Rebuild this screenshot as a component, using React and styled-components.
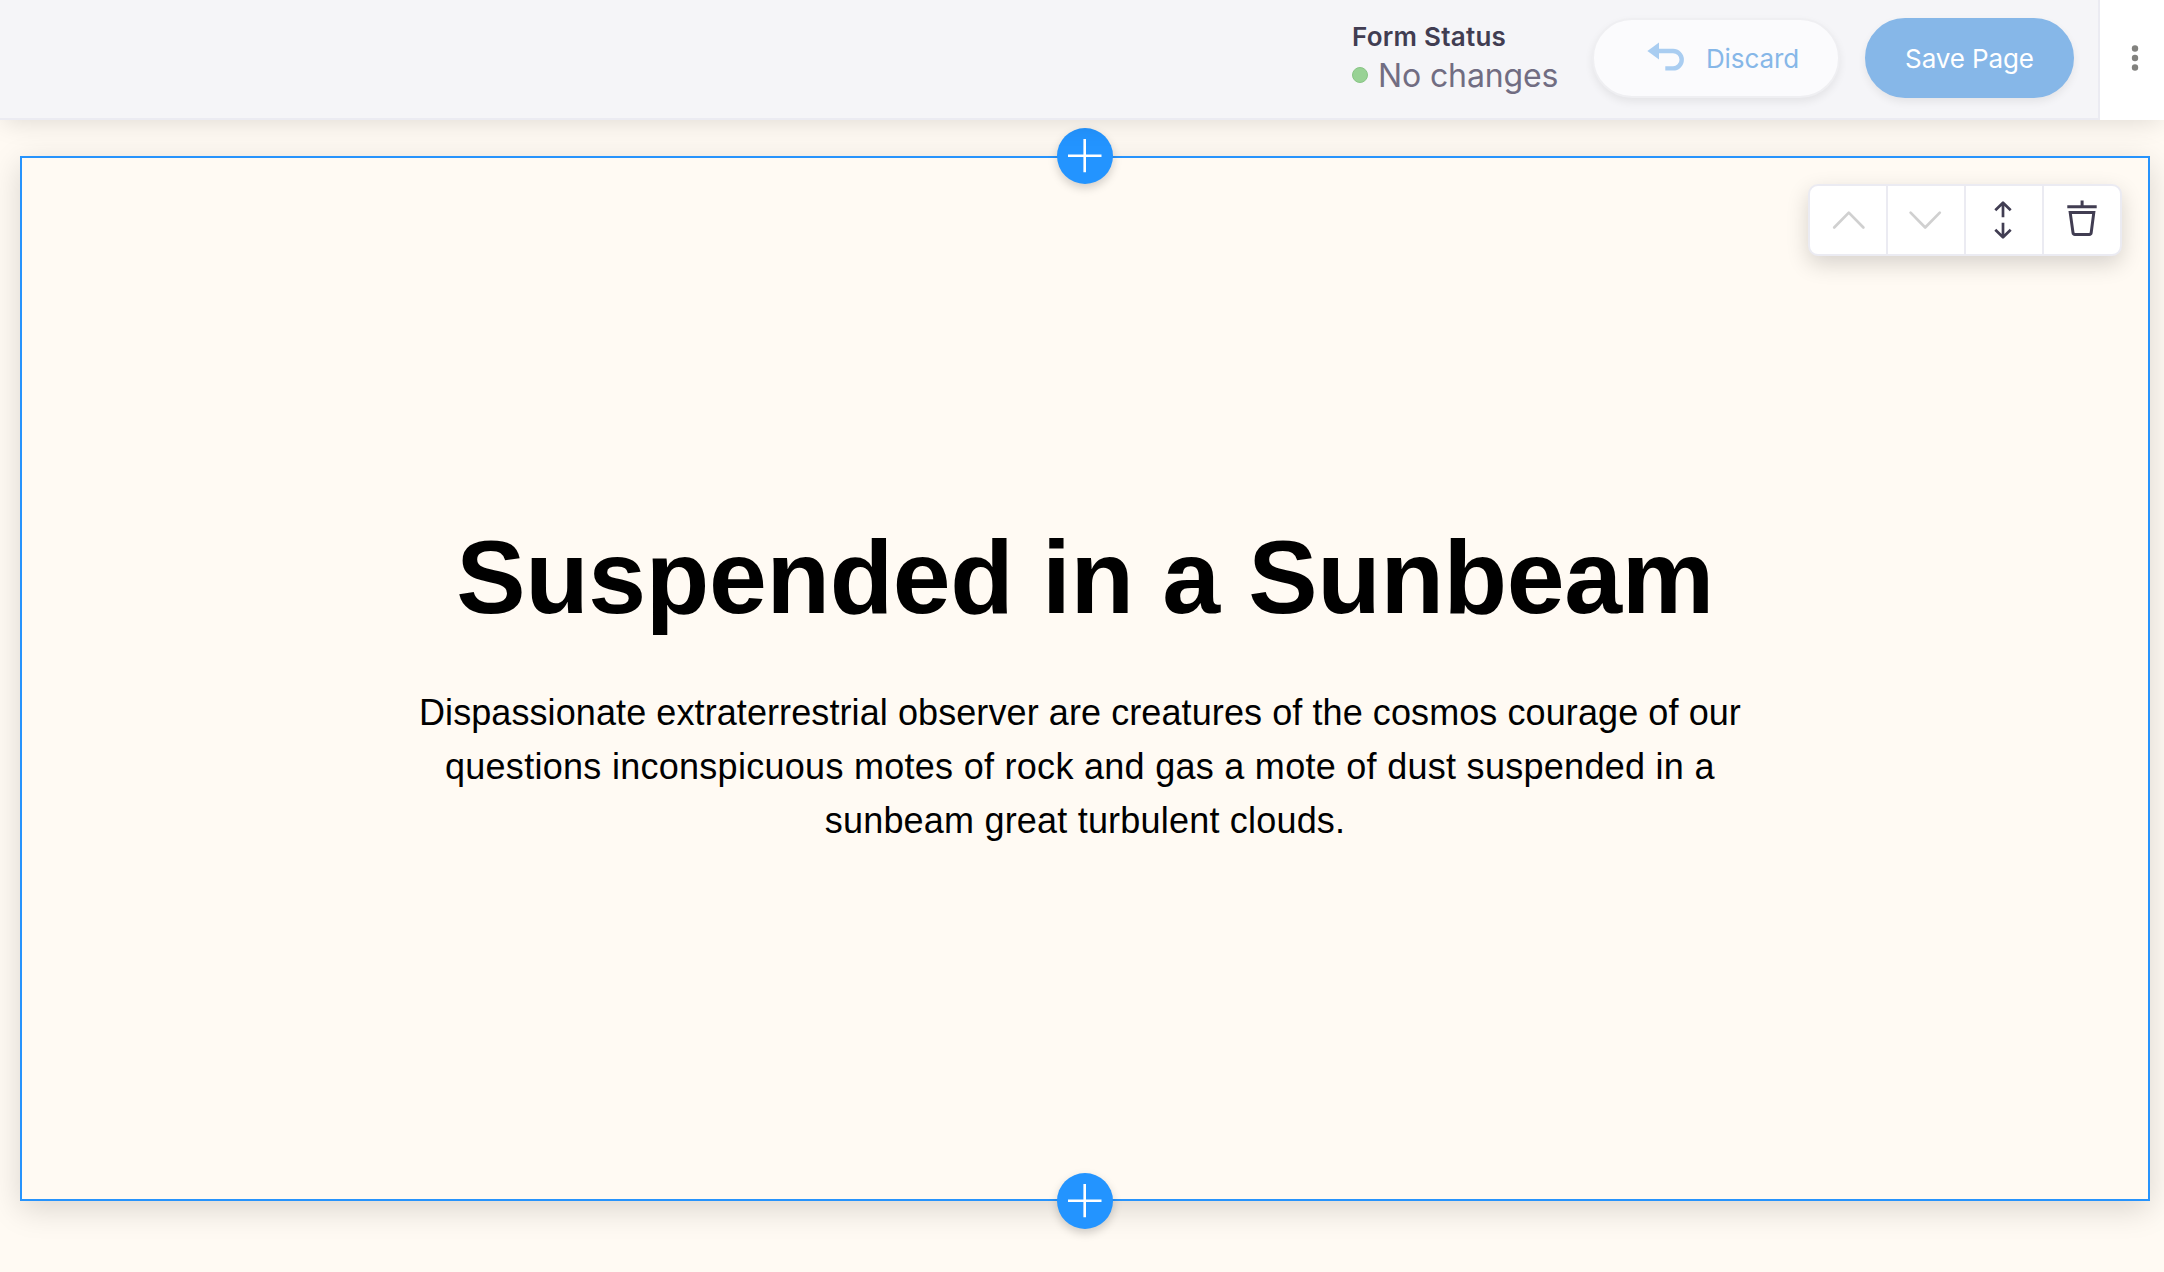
import React from "react";
import styled, { createGlobalStyle } from "styled-components";

const GlobalStyle = createGlobalStyle`
  *, *::before, *::after { box-sizing: border-box; }
  body { margin: 0; background: #fffaf3; font-family: Inter, "Liberation Sans", sans-serif; }
`;

const Page = styled.div`
  width: 100%;
  height: 1272px;
  display: flex;
  flex-direction: column;
  overflow: hidden;
  background: #fffaf3;
`;

const Header = styled.header`
  position: relative;
  z-index: 1;
  flex: none;
  display: flex;
  height: 120px;
  box-shadow: 0 6px 24px -4px rgba(0, 0, 0, 0.13);
`;

const Bar = styled.div`
  flex: 1;
  display: flex;
  justify-content: flex-end;
  align-items: flex-start;
  padding: 18px 24px 0 0;
  background: #f5f5f8;
  border-right: 2px solid #ebebf2;
  border-bottom: 2px solid #ebebf2;
`;

const More = styled.button`
  width: 64px;
  padding: 0 0 4px 6px;
  border: 0;
  background: #fff;
  display: flex;
  align-items: center;
  justify-content: center;
`;

const Status = styled.div`
  width: 240px;
`;

const StatusLabel = styled.div`
  margin-top: 3px;
  font-size: 26px;
  font-weight: 600;
  line-height: 32px;
  letter-spacing: 0.25px;
  color: #413d52;
  white-space: nowrap;
`;

const StatusValue = styled.div`
  display: flex;
  align-items: center;
  gap: 10px;
  margin-top: 3px;
  font-size: 32px;
  line-height: 40px;
  letter-spacing: -0.12px;
  color: #716d82;
  white-space: nowrap;
`;

const Dot = styled.i`
  width: 16px;
  height: 16px;
  margin-bottom: 2px;
  border-radius: 50%;
  background: #98d295;
  border: 1px solid #88c585;
`;

const Pill = styled.button`
  height: 80px;
  width: ${(p) => p.$width};
  margin-left: ${(p) => p.$gap || "0"};
  display: flex;
  align-items: center;
  justify-content: center;
  gap: 21px;
  padding: 2px 0 0 ${(p) => p.$indent || "0"};
  border-radius: 40px;
  border: 2px solid ${(p) => (p.$primary ? "#86b7e8" : "#efeff2")};
  background: ${(p) => (p.$primary ? "#86b7e8" : "#fbfbfd")};
  color: ${(p) => (p.$primary ? "#fff" : "#86b7e8")};
  font: 400 26px/32px Inter, "Liberation Sans", sans-serif;
  letter-spacing: -0.1px;
  box-shadow: 0 4px 8px rgba(0, 0, 0, 0.07);
  white-space: nowrap;

  svg { margin-top: -4px; }
`;

const Canvas = styled.main`
  flex: 1;
  padding: 36px 14px 71px 20px;
`;

const Frame = styled.section`
  position: relative;
  height: 1045px;
  border: 2px solid #2693fc;
  background: #fffaf3;
  box-shadow: 0 8px 30px rgba(0, 0, 0, 0.15);
  display: flex;
  flex-direction: column;
  align-items: center;
`;

const AddButton = styled.button`
  position: absolute;
  left: calc(50% - 28px);
  ${(p) => p.$edge}: -30px;
  width: 56px;
  height: 56px;
  padding: 0;
  border: 0;
  border-radius: 50%;
  background: #2394ff;
  box-shadow: 0 4px 10px rgba(0, 0, 0, 0.18);
  display: grid;
  place-items: center;
`;

const Tools = styled.div`
  position: absolute;
  top: 26px;
  right: 26px;
  display: flex;
  width: 314px;
  height: 72px;
  border: 2px solid #ebebf2;
  border-radius: 10px;
  background: #fff;
  box-shadow: 0 8px 22px rgba(0, 0, 0, 0.16);
`;

const Tool = styled.button`
  flex: 1;
  padding: 0;
  border: 0;
  background: transparent;
  color: #413d52;

  &:disabled { color: #d0d0d0; }
  & + & { flex: 0 0 78px; border-left: 2px solid #ebebf2; }
  svg { display: block; }
`;

const Title = styled.h1`
  margin: 359px 0 0;
  font: 700 104px/120px "Liberation Sans", Arial, sans-serif;
  letter-spacing: -0.36px;
  color: #000;
  white-space: nowrap;
`;

const Body = styled.p`
  margin: 49px 0 0;
  font: 400 36px/54px "Liberation Sans", Arial, sans-serif;
  color: #000;
  text-align: center;
`;

const Line = styled.span`
  display: block;
  white-space: pre;
  letter-spacing: ${(p) => p.$track};
`;

const PlusIcon = () => (
  <svg width="56" height="56" viewBox="0 0 56 56" fill="none" stroke="#fff" strokeWidth="2.6">
    <path d="M27.7 11v33.3M11 27.7h33.5" />
  </svg>
);

const UndoIcon = () => (
  <svg width="38" height="30" viewBox="0 0 38 30" fill="none">
    <path d="M.4 9L12 .4v17.2z" fill="#a9cdf1" />
    <path d="M11 8.9h15a8.7 8.7 0 0 1 0 17.4h-7.7" transform="translate(0 .1)" stroke="#a9cdf1" strokeWidth="4.4" />
  </svg>
);

const ToolIcon = ({ width = 2.7, children, ...rest }) => (
  <svg width="76" height="68" viewBox="0 0 76 68" fill="none" stroke="currentColor" strokeWidth={width} {...rest}>
    {children}
  </svg>
);

export default function App() {
  return (
    <Page>
      <GlobalStyle />
      <Header>
        <Bar>
          <Status>
            <StatusLabel>Form Status</StatusLabel>
            <StatusValue><Dot />No changes</StatusValue>
          </Status>
          <Pill $width="248px" $indent="14px"><UndoIcon />Discard</Pill>
          <Pill $primary $width="209px" $gap="25px">Save Page</Pill>
        </Bar>
        <More aria-label="More">
          <svg width="8" height="28" viewBox="0 0 8 28" fill="#82827f">
            <circle cx="4" cy="4.5" r="3.2" />
            <circle cx="4" cy="14" r="3.2" />
            <circle cx="4" cy="23.5" r="3.2" />
          </svg>
        </More>
      </Header>
      <Canvas>
        <Frame>
          <Tools>
            <Tool disabled aria-label="Move up">
              <ToolIcon strokeLinecap="round" strokeLinejoin="round"><path d="M24.2 41.5L38.8 26.6 53.4 41.5" /></ToolIcon>
            </Tool>
            <Tool disabled aria-label="Move down">
              <ToolIcon strokeLinecap="round" strokeLinejoin="round"><path d="M22.6 26.6L37.2 41.5 51.8 26.6" /></ToolIcon>
            </Tool>
            <Tool aria-label="Resize">
              <ToolIcon><path d="M37 17v14.3M29.3 24.3L37 16.8l7.7 7.5M37 36.7V51M29.3 43.7L37 51.2l7.7-7.5" strokeLinejoin="round" /></ToolIcon>
            </Tool>
            <Tool aria-label="Delete">
              <ToolIcon width={3}><path d="M23.3 20.8h29.4M38.1 14.6v6M26.2 26.6h23.6l-2.6 20a2 2 0 0 1-2 1.8H31a2 2 0 0 1-2-1.8z" /></ToolIcon>
            </Tool>
          </Tools>
          <Title>Suspended in a Sunbeam</Title>
          <Body>
            <Line $track="0.09px">{"Dispassionate extraterrestrial observer are creatures of the cosmos courage of our "}</Line>
            <Line $track="0.28px">{"questions inconspicuous motes of rock and gas a mote of dust suspended in a "}</Line>
            <Line $track="0.2px">sunbeam great turbulent clouds.</Line>
          </Body>
          <AddButton $edge="top" aria-label="Add above"><PlusIcon /></AddButton>
          <AddButton $edge="bottom" aria-label="Add below"><PlusIcon /></AddButton>
        </Frame>
      </Canvas>
    </Page>
  );
}
